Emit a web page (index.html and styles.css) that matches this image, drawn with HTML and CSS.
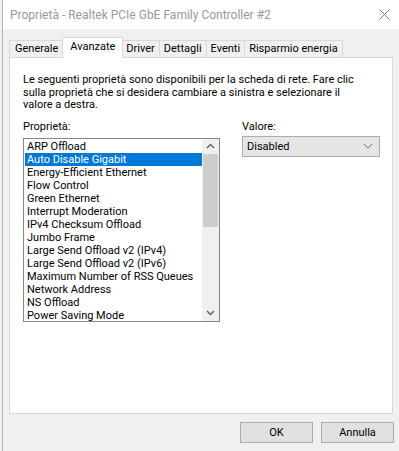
FILE: index.html
```html
<!DOCTYPE html>
<html lang="it">

<head>
  <meta charset="UTF-8" />
  <meta name="viewport" content="width=device-width, initial-scale=1.0" />
  <title>Proprietà - Realtek PCIe GbE Family Controller #2</title>
  <link rel="stylesheet" href="styles.css">
</head>

<body>
  <div class="window">
    <div class="titlebar">
      <span class="title">Proprietà - Realtek PCIe GbE Family Controller #2</span>
      <svg class="close" width="11" height="11" viewBox="0 0 11 11">
        <path d="M0.5 0.5 L10.5 10.5 M10.5 0.5 L0.5 10.5" stroke="#7a7a7a" stroke-width="1" fill="none" />
      </svg>
    </div>

    <div class="tabs">
      <div class="tab">Generale</div>
      <div class="tab active">Avanzate</div>
      <div class="tab">Driver</div>
      <div class="tab">Dettagli</div>
      <div class="tab">Eventi</div>
      <div class="tab">Risparmio energia</div>
    </div>

    <div class="panel">
      <p class="intro">
        Le seguenti proprietà sono disponibili per la scheda di rete. Fare clic
        sulla proprietà che si desidera cambiare a sinistra e selezionare il
        valore a destra.
      </p>

      <div class="columns">
        <div class="col-left">
          <div class="label">Proprietà:</div>
          <div class="listbox">
            <ul class="items">
              <li>ARP Offload</li>
              <li class="selected">Auto Disable Gigabit</li>
              <li>Energy-Efficient Ethernet</li>
              <li>Flow Control</li>
              <li>Green Ethernet</li>
              <li>Interrupt Moderation</li>
              <li>IPv4 Checksum Offload</li>
              <li>Jumbo Frame</li>
              <li>Large Send Offload v2 (IPv4)</li>
              <li>Large Send Offload v2 (IPv6)</li>
              <li>Maximum Number of RSS Queues</li>
              <li>Network Address</li>
              <li>NS Offload</li>
              <li>Power Saving Mode</li>
            </ul>
            <div class="scrollbar">
              <div class="arrow">
                <svg width="9" height="6" viewBox="0 0 9 6">
                  <path d="M1 5 L4.5 1.5 L8 5" stroke="#606060" stroke-width="1.4" fill="none" />
                </svg>
              </div>
              <div class="track">
                <div class="thumb"></div>
              </div>
              <div class="arrow">
                <svg width="9" height="6" viewBox="0 0 9 6">
                  <path d="M1 1 L4.5 4.5 L8 1" stroke="#606060" stroke-width="1.4" fill="none" />
                </svg>
              </div>
            </div>
          </div>
        </div>

        <div class="col-right">
          <div class="label">Valore:</div>
          <div class="select">
            <span>Disabled</span>
            <svg width="10" height="6" viewBox="0 0 10 6">
              <path d="M1 1 L5 5 L9 1" stroke="#707070" stroke-width="1" fill="none" />
            </svg>
          </div>
        </div>
      </div>
    </div>

    <div class="footer">
      <button type="button" class="btn">OK</button>
      <button type="button" class="btn">Annulla</button>
    </div>
  </div>
</body>

</html>
```

FILE: styles.css
```css
html,
body {
  margin: 0;
  padding: 0;
}

body {
  font-family: Roboto, "Liberation Sans", Arial, sans-serif;
  font-size: 11px;
  color: #000;
  background: #f0f0f0;
  width: 399px;
  height: 451px;
  overflow: hidden;
}

.window {
  height: 451px;
  background: #f0f0f0;
  border-left: 1px solid #b5b5b5;
  margin-left: 2px;
  display: flex;
  flex-direction: column;
}

/* Title bar */
.titlebar {
  height: 29px;
  background: #fff;
  display: flex;
  align-items: center;
  justify-content: space-between;
  padding: 0 9px 0 7px;
}

.title {
  font-size: 12px;
  color: #999;
}

.close {
  display: block;
}

/* Tabs */
.tabs {
  display: flex;
  align-items: flex-end;
  padding-left: 6px;
  height: 28px;
}

.tab {
  height: 16px;
  line-height: 16px;
  padding: 0 4px;
  border: 1px solid #d9d9d9;
  border-bottom: none;
  margin-left: -1px;
  background: #f0f0f0;
}

.tab:first-child {
  margin-left: 0;
  padding: 0 5px;
}

.tab.active {
  position: relative;
  z-index: 1;
  height: 20px;
  line-height: 17px;
  margin-bottom: -1px;
  padding: 0 7px;
  margin-left: -2px;
  margin-right: -1px;
  background: #fff;
}

/* Panel */
.panel {
  margin: 0 6px 0 6px;
  height: 357px;
  background: #fff;
  border: 1px solid #d9d9d9;
  padding: 16px 12px 0 13px;
  box-sizing: border-box;
}

.intro {
  margin: 0;
  line-height: 12.5px;
  width: 340px;
}

.columns {
  display: flex;
  margin-top: 8px;
}

.col-left {
  width: 197px;
  flex-shrink: 0;
}

.col-right {
  margin-left: 22px;
}

.label {
  height: 13px;
  line-height: 13px;
  margin-bottom: 5px;
}

/* List box */
.listbox {
  display: flex;
  height: 184px;
  box-sizing: border-box;
  border: 1px solid #828790;
}

.items {
  list-style: none;
  margin: 0;
  padding: 1px 0 0 1px;
  flex: 1;
  overflow: hidden;
}

.items li {
  height: 13px;
  line-height: 13px;
  padding-left: 2px;
  white-space: nowrap;
}

.items li.selected {
  background: #0078d7;
  color: #fff;
}

.scrollbar {
  width: 17px;
  background: #f0f0f0;
  display: flex;
  flex-direction: column;
}

.arrow {
  height: 15px;
  display: flex;
  align-items: center;
  justify-content: center;
}

.track {
  flex: 1;
  padding: 0 1px;
}

.thumb {
  height: 73px;
  background: #cdcdcd;
}

/* Combo box */
.select {
  height: 21px;
  width: 138px;
  box-sizing: border-box;
  border: 1px solid #adadad;
  background: #e5e5e5;
  display: flex;
  align-items: center;
  justify-content: space-between;
  padding: 0 6px 0 4px;
  margin-top: -2px;
}

/* Buttons */
.footer {
  display: flex;
  justify-content: flex-end;
  gap: 8px;
  padding: 8px 5px 0 0;
}

.btn {
  width: 73px;
  height: 21px;
  font-family: Roboto, "Liberation Sans", Arial, sans-serif;
  font-size: 11px;
  color: #000;
  background: #e1e1e1;
  border: 1px solid #adadad;
  padding: 0;
}
```
